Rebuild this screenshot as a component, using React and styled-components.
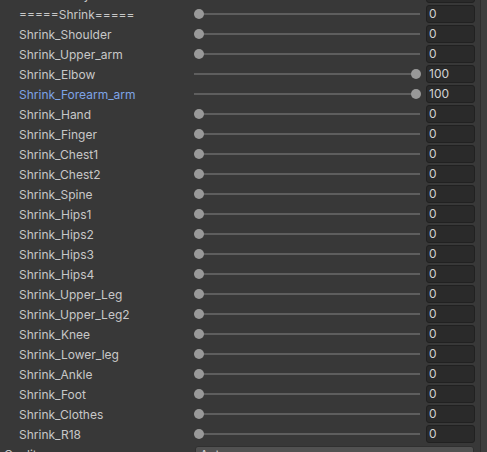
import React from "react";
import styled, { createGlobalStyle } from "styled-components";

const GlobalStyle = createGlobalStyle`
  html, body {
    margin: 0;
    padding: 0;
    background: #383838;
    overflow: hidden;
  }
  body {
    font-family: Inter, "Noto Sans", "Liberation Sans", sans-serif;
  }
`;

const rows = [
  { name: "=====Shrink=====", value: 0 },
  { name: "Shrink_Shoulder", value: 0 },
  { name: "Shrink_Upper_arm", value: 0 },
  { name: "Shrink_Elbow", value: 100 },
  { name: "Shrink_Forearm_arm", value: 100, modified: true },
  { name: "Shrink_Hand", value: 0 },
  { name: "Shrink_Finger", value: 0 },
  { name: "Shrink_Chest1", value: 0 },
  { name: "Shrink_Chest2", value: 0 },
  { name: "Shrink_Spine", value: 0 },
  { name: "Shrink_Hips1", value: 0 },
  { name: "Shrink_Hips2", value: 0 },
  { name: "Shrink_Hips3", value: 0 },
  { name: "Shrink_Hips4", value: 0 },
  { name: "Shrink_Upper_Leg", value: 0 },
  { name: "Shrink_Upper_Leg2", value: 0 },
  { name: "Shrink_Knee", value: 0 },
  { name: "Shrink_Lower_leg", value: 0 },
  { name: "Shrink_Ankle", value: 0 },
  { name: "Shrink_Foot", value: 0 },
  { name: "Shrink_Clothes", value: 0 },
  { name: "Shrink_R18", value: 0 },
];

export default function App() {
  return (
    <>
      <GlobalStyle />
      <Panel>
        <Content>
          <List>
            <Row>
              <Label>Shrink_Body_Slim</Label>
              <SliderField value={0} />
              <NumberBox>0</NumberBox>
            </Row>
            {rows.map((r) => (
              <Row key={r.name}>
                <Label $modified={r.modified}>{r.name}</Label>
                <SliderField value={r.value} />
                <NumberBox>{r.value}</NumberBox>
              </Row>
            ))}
            <QualityRow>
              <QualityLabel>Quality</QualityLabel>
              <Dropdown>
                <span>Auto</span>
                <DropArrow />
              </Dropdown>
            </QualityRow>
          </List>
        </Content>
        <Scrollbar />
      </Panel>
    </>
  );
}

function SliderField({ value }) {
  return (
    <Slider>
      <Track />
      <Thumb style={{ left: `${5 + (value / 100) * 217}px` }} />
    </Slider>
  );
}

const Panel = styled.div`
  display: flex;
  width: 487px;
  height: 452px;
  overflow: hidden;
  background: #383838;
`;
const Content = styled.div`
  flex: 1;
  overflow: hidden;
`;
const List = styled.div`
  display: flex;
  flex-direction: column;
  margin-top: -16px;
`;
const Row = styled.div`
  display: flex;
  align-items: center;
  height: 20px;
  padding: 0 5px 0 19px;
`;
const Label = styled.div`
  width: 175px;
  flex-shrink: 0;
  font-size: 12px;
  color: ${(p) => (p.$modified ? "#7ea4e6" : "#c8c8c8")};
  white-space: nowrap;
  overflow: hidden;
`;
const Slider = styled.div`
  position: relative;
  flex: 1;
  height: 20px;
  margin-right: 6px;
`;
const Track = styled.div`
  position: absolute;
  left: 0;
  right: 0;
  top: 9px;
  height: 2px;
  background: #5e5e5e;
`;
const Thumb = styled.div`
  position: absolute;
  top: 5px;
  width: 10px;
  height: 10px;
  margin-left: -5px;
  border-radius: 50%;
  background: #999999;
`;
const NumberBox = styled.div`
  box-sizing: border-box;
  width: 49px;
  height: 18px;
  flex-shrink: 0;
  padding-left: 2px;
  border: 1px solid #212121;
  border-radius: 3px;
  background: #2a2a2a;
  color: #d2d2d2;
  font-size: 12px;
  line-height: 16px;
`;
const QualityRow = styled.div`
  display: flex;
  align-items: center;
  height: 20px;
  padding: 0 6px 0 4px;
`;
const QualityLabel = styled.div`
  width: 191px;
  font-size: 12px;
  color: #c8c8c8;
`;
const Dropdown = styled.div`
  box-sizing: border-box;
  flex: 1;
  height: 18px;
  display: flex;
  align-items: center;
  justify-content: space-between;
  padding: 0 8px 0 4px;
  margin-top: 1px;
  border: 1px solid #303030;
  border-radius: 3px;
  background: #515151;
  color: #d2d2d2;
  font-size: 12px;
`;
const DropArrow = styled.div`
  width: 0;
  height: 0;
  border-left: 4px solid transparent;
  border-right: 4px solid transparent;
  border-top: 5px solid #c4c4c4;
`;
const Scrollbar = styled.div`
  width: 6px;
  flex-shrink: 0;
  border-left: 1px solid #2e2e2e;
  background: #3e3e3e;
`;
